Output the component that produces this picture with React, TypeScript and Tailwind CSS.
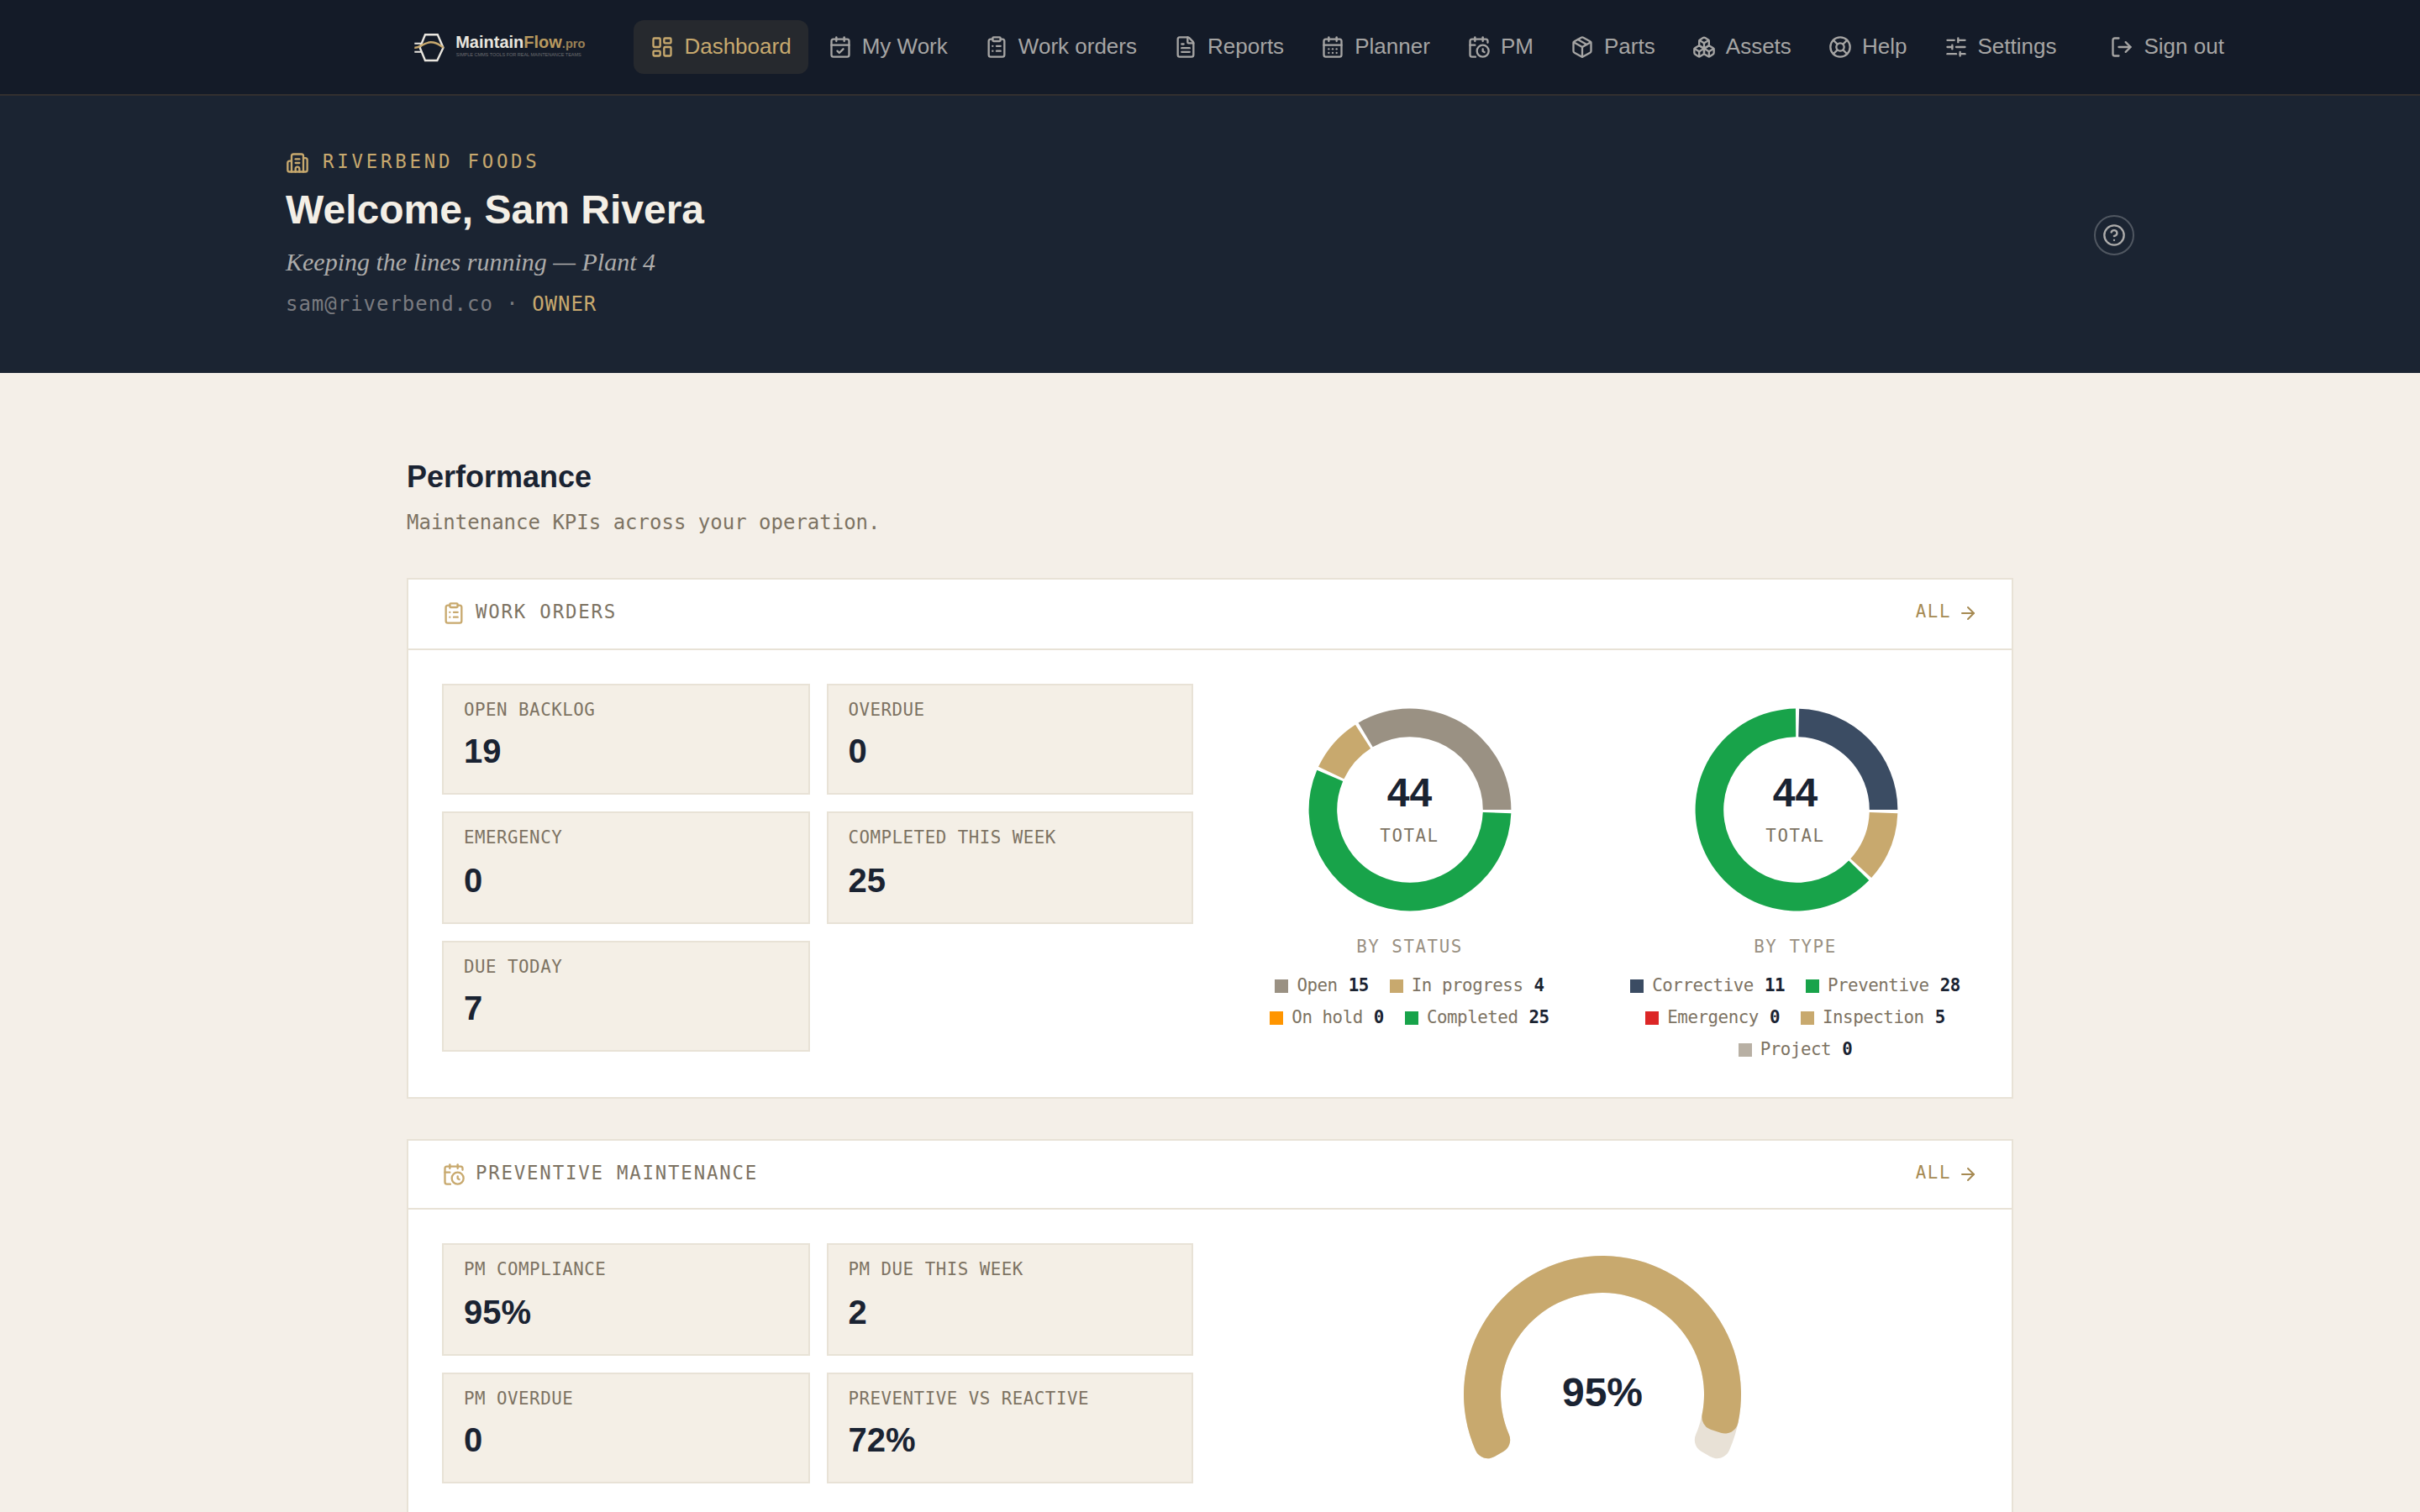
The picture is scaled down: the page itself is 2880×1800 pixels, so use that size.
import type { ReactNode } from "react";
import {
  ArrowRight,
  Boxes,
  Building2,
  CalendarCheck,
  CalendarClock,
  CalendarDays,
  CircleHelp,
  ClipboardList,
  FileText,
  LayoutDashboard,
  LifeBuoy,
  LogOut,
  Package,
  SlidersHorizontal,
  type LucideIcon,
} from "lucide-react";

type Slice = { label: string; value: number; color: string };
type Stat = { label: string; value: string };

const navItems: { label: string; icon: LucideIcon; active?: boolean }[] = [
  { label: "Dashboard", icon: LayoutDashboard, active: true },
  { label: "My Work", icon: CalendarCheck },
  { label: "Work orders", icon: ClipboardList },
  { label: "Reports", icon: FileText },
  { label: "Planner", icon: CalendarDays },
  { label: "PM", icon: CalendarClock },
  { label: "Parts", icon: Package },
  { label: "Assets", icon: Boxes },
  { label: "Help", icon: LifeBuoy },
  { label: "Settings", icon: SlidersHorizontal },
];

const workOrderStats: Stat[] = [
  { label: "Open backlog", value: "19" },
  { label: "Overdue", value: "0" },
  { label: "Emergency", value: "0" },
  { label: "Completed this week", value: "25" },
  { label: "Due today", value: "7" },
];

const pmStats: Stat[] = [
  { label: "PM compliance", value: "95%" },
  { label: "PM due this week", value: "2" },
  { label: "PM overdue", value: "0" },
  { label: "Preventive vs reactive", value: "72%" },
];

const byStatus: Slice[] = [
  { label: "Open", value: 15, color: "#9a9183" },
  { label: "In progress", value: 4, color: "#c8a96e" },
  { label: "On hold", value: 0, color: "#ff9500" },
  { label: "Completed", value: 25, color: "#18a34a" },
];

const byType: Slice[] = [
  { label: "Corrective", value: 11, color: "#3b4c63" },
  { label: "Preventive", value: 28, color: "#18a34a" },
  { label: "Emergency", value: 0, color: "#dc2626" },
  { label: "Inspection", value: 5, color: "#c8a96e" },
  { label: "Project", value: 0, color: "#b8b0a4" },
];

// angles in degrees, counter-clockwise from 3 o'clock
function point(cx: number, cy: number, r: number, deg: number) {
  const a = (deg * Math.PI) / 180;
  return `${(cx + r * Math.cos(a)).toFixed(3)} ${(cy - r * Math.sin(a)).toFixed(3)}`;
}

function sector(cx: number, cy: number, r: number, R: number, start: number, end: number) {
  const large = end - start > 180 ? 1 : 0;
  return [
    `M${point(cx, cy, R, start)}`,
    `A${R} ${R} 0 ${large} 0 ${point(cx, cy, R, end)}`,
    `L${point(cx, cy, r, end)}`,
    `A${r} ${r} 0 ${large} 1 ${point(cx, cy, r, start)}Z`,
  ].join("");
}

// clockwise sector with rounded corners, from angle a down to angle b
function roundedSector(cx: number, cy: number, r: number, R: number, a: number, b: number, c: number) {
  const dOut = (Math.asin(c / (R - c)) * 180) / Math.PI;
  const dIn = (Math.asin(c / (r + c)) * 180) / Math.PI;
  const eOut = (R - c) * Math.cos((dOut * Math.PI) / 180);
  const eIn = (r + c) * Math.cos((dIn * Math.PI) / 180);
  const large = a - b > 180 ? 1 : 0;
  return [
    `M${point(cx, cy, eOut, a)}`,
    `A${c} ${c} 0 0 1 ${point(cx, cy, R, a - dOut)}`,
    `A${R} ${R} 0 ${large} 1 ${point(cx, cy, R, b + dOut)}`,
    `A${c} ${c} 0 0 1 ${point(cx, cy, eOut, b)}`,
    `L${point(cx, cy, eIn, b)}`,
    `A${c} ${c} 0 0 1 ${point(cx, cy, r, b + dIn)}`,
    `A${r} ${r} 0 ${large} 0 ${point(cx, cy, r, a - dIn)}`,
    `A${c} ${c} 0 0 1 ${point(cx, cy, eIn, a)}Z`,
  ].join("");
}

function Logo() {
  return (
    <svg width="222" height="56" viewBox="0 0 222 56" className="shrink-0" aria-label="MaintainFlow.pro">
      <g fill="none" strokeWidth="2.4">
        <path d="M22 13.3H36.800L43.500 28.700 36.300 44H22L15.700 28.700Z" stroke="#e9e6df" />
        <path d="M9.300 23.700H17.500M9.300 33.700H17.500" stroke="#e9e6df" strokeWidth="2" />
        <path d="M9.300 28.700C16 29.500 20 22.300 28.700 22.300S38.500 26 43.800 28.700" stroke="#c8a96e" />
      </g>
      <text x="58.200" y="28.800" fontSize="20" fontWeight="700" fill="#e9e6df" className="font-['Liberation_Sans',sans-serif]">
        Maintain<tspan fill="#b8995f">Flow</tspan><tspan fill="#9a8156" fontSize="14.600">.pro</tspan>
      </text>
      <text x="58.800" y="38.800" fontSize="5.600" fill="#6b6c70" textLength="149" className="font-['Liberation_Sans',sans-serif]">
        SIMPLE CMMS TOOLS FOR REAL MAINTENANCE TEAMS
      </text>
    </svg>
  );
}

function NavItem({ label, icon: Icon, active }: { label: string; icon: LucideIcon; active?: boolean }) {
  return (
    <a
      className={`flex h-16 items-center gap-3 rounded-xl px-5 text-[26px] whitespace-nowrap ${
        active ? "bg-[#26292e] text-[#c8a96e]" : "text-[#a6a5a4]"
      }`}
    >
      <Icon size={28} />
      <span className="pb-0.5">{label}</span>
    </a>
  );
}

function NavBar() {
  return (
    <nav className="flex h-[114px] items-center border-b-2 border-[#332f2f] bg-[#141b28] pl-[484px]">
      <Logo />
      <div className="ml-[48.4px] flex items-center gap-[4.1px]">
        {navItems.map(item => <NavItem key={item.label} {...item} />)}
      </div>
      <div className="ml-6">
        <NavItem label="Sign out" icon={LogOut} />
      </div>
    </nav>
  );
}

function Hero() {
  return (
    <header className="h-[330px] bg-[#1b2432]">
      <div className="mx-auto flex w-[2200px] items-start justify-between">
        <div className="flex flex-col items-start pt-[63px]">
          <div className="flex h-[34px] items-center gap-4 font-['DejaVu_Sans_Mono',monospace] text-[22.4px] tracking-[3.76px] text-[#c8a96e] uppercase">
            <Building2 size={28} />
            <span className="pb-0.5">Riverbend Foods</span>
          </div>
          <h1 className="mt-[9px] text-[48px] leading-[60px] font-bold text-[#f4efe6]">Welcome, Sam Rivera</h1>
          <p className="mt-2 font-['Liberation_Serif',serif] text-[30px] leading-[48px] text-[#adacab] italic">
            Keeping the lines running — Plant 4
          </p>
          <p className="mt-[7px] font-['DejaVu_Sans_Mono',monospace] text-[24px] leading-[38px] tracking-[0.98px] text-[#7a7b80]">
            sam@riverbend.co · <span className="text-[#c8a96e]">OWNER</span>
          </p>
        </div>
        <button aria-label="Help" className="mt-[142px] flex size-12 items-center justify-center rounded-full border-2 border-[#505761] text-[#adacab]">
          <CircleHelp size={28} />
        </button>
      </div>
    </header>
  );
}

function StatGrid({ stats, rows }: { stats: Stat[]; rows: string }) {
  return (
    <div className={`grid grid-cols-[437.5px_1fr] gap-5 self-start ${rows}`}>
      {stats.map(s => (
        <div key={s.label} className="flex flex-col justify-between border-2 border-[#e8e2d6] bg-[#f4efe6] px-6 pt-4 pb-[26px]">
          <div className="font-['DejaVu_Sans_Mono',monospace] text-[20.8px] leading-[26px] tracking-[0.5px] text-[#7d7363] uppercase">
            {s.label}
          </div>
          <div className="text-[40px] leading-[48px] font-bold">{s.value}</div>
        </div>
      ))}
    </div>
  );
}

function Donut({ title, slices, cx }: { title: string; slices: Slice[]; cx: number }) {
  const total = slices.reduce((sum, s) => sum + s.value, 0);
  const shown = slices.filter(s => s.value > 0);
  const pad = 2;
  let angle = 0;
  return (
    <div className="flex flex-col items-center font-['DejaVu_Sans_Mono',monospace]">
      <div className="grid w-full">
        <svg width="435" height="300" className="[grid-area:1/1]">
          {shown.map(s => {
            const start = angle;
            const end = start + (s.value / total) * (360 - shown.length * pad);
            angle = end + pad;
            return <path key={s.label} d={sector(cx, 150, 86.800, 120.400, start, end)} fill={s.color} />;
          })}
        </svg>
        <div className="flex flex-col items-center pt-[102px] [grid-area:1/1]">
          <div className="font-['Liberation_Sans',sans-serif] text-[48px] leading-[56px] font-bold">{total}</div>
          <div className="mt-[10px] text-[20.8px] leading-[26px] tracking-[1.56px] text-[#7d7363]">TOTAL</div>
        </div>
      </div>
      <div className="text-[20.8px] leading-[26px] tracking-[1.56px] text-[#9a9183] uppercase">{title}</div>
      <div className="mt-[15px] flex flex-wrap justify-center gap-x-[25px] text-[20.8px] leading-[36px] tracking-[-0.46px] text-[#7d7363]">
        {slices.map(s => (
          <div key={s.label} className="flex items-center gap-[10px]">
            <span className="size-4" style={{ background: s.color }} />
            <span className="pb-0.5">
              {s.label} <b className="ml-px text-[#1a2332]">{s.value}</b>
            </span>
          </div>
        ))}
      </div>
    </div>
  );
}

function Gauge({ percent }: { percent: number }) {
  return (
    <div className="grid">
      <svg width="894" height="360" className="[grid-area:1/1]">
        <path d={roundedSector(447, 180, 121, 165, 210, -30, 16)} fill="#e8e1d6" />
        <path d={roundedSector(447, 180, 121, 165, 210, 210 - (240 * percent) / 100, 16)} fill="#c8a96e" />
      </svg>
      <div className="pt-[150px] text-center text-[48px] leading-[56px] font-bold [grid-area:1/1]">{percent}%</div>
    </div>
  );
}

function Card({ title, icon: Icon, className, head, children }: {
  title: string;
  icon: LucideIcon;
  className: string;
  head: string;
  children: ReactNode;
}) {
  return (
    <section className={`border-2 border-[#e8e2d6] bg-white ${className}`}>
      <div className={`flex items-center justify-between border-b-2 border-[#e8e2d6] px-10 font-['DejaVu_Sans_Mono',monospace] ${head}`}>
        <h3 className="flex items-center gap-3 text-[22.4px] tracking-[0.08em] text-[#7d7363] uppercase">
          <Icon size={28} className="text-[#c8a96e]" />
          <span className="pb-[3px]">{title}</span>
        </h3>
        <a className="flex items-center gap-2 text-[20.8px] tracking-[1.56px] text-[#a68a52]">
          <span className="pb-0.5">ALL</span>
          <ArrowRight size={24} />
        </a>
      </div>
      <div className="grid grid-cols-2 gap-10 p-10">{children}</div>
    </section>
  );
}

export default function App() {
  return (
    <div className="h-[1800px] w-[2880px] overflow-hidden bg-[#f4efe8] font-['Liberation_Sans',sans-serif] text-[#1a2332]">
      <NavBar />
      <Hero />
      <main className="mx-auto w-[1912px] pt-[102px]">
        <h2 className="text-[36px] leading-[44px] font-bold">Performance</h2>
        <p className="mt-[13px] mb-[47px] font-['DejaVu_Sans_Mono',monospace] text-[24px] leading-[38px] text-[#7d7363]">
          Maintenance KPIs across your operation.
        </p>
        <Card title="Work orders" icon={ClipboardList} className="h-[620px]" head="h-[84px] pb-0.5">
          <StatGrid stats={workOrderStats} rows="grid-rows-[132px_134px_132px]" />
          <div className="grid grid-cols-2 gap-6">
            <Donut title="By status" slices={byStatus} cx={218} />
            <Donut title="By type" slices={byType} cx={219} />
          </div>
        </Card>
        <Card title="Preventive maintenance" icon={CalendarClock} className="mt-12 h-[620px]" head="h-[82px]">
          <StatGrid stats={pmStats} rows="grid-rows-[134px_132px]" />
          <Gauge percent={95} />
        </Card>
      </main>
    </div>
  );
}
